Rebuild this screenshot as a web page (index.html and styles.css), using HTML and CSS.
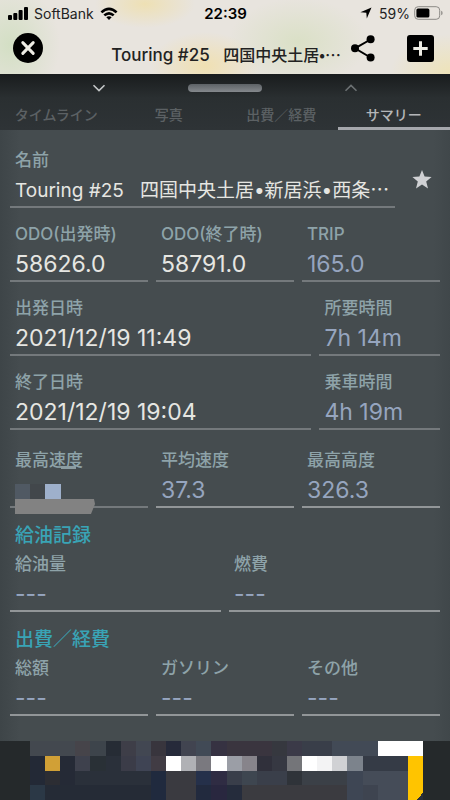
FILE: index.html
```html
<!DOCTYPE html>
<html lang="ja">
<head>
<meta charset="utf-8">
<meta name="viewport" content="width=device-width, initial-scale=1">
<title>Touring #25</title>
<link rel="stylesheet" href="styles.css">
</head>
<body>
<div class="app">
  <header class="top">
    <div class="status">
      <div class="status-side">
        <svg class="signal" viewBox="0 0 20 13" aria-hidden="true"><rect x="0" y="8" width="4" height="5" rx="1"/><rect x="5.3" y="6" width="4" height="7" rx="1"/><rect x="10.6" y="3" width="4" height="10" rx="1"/><rect x="16" y="0" width="4" height="13" rx="1"/></svg>
        <span>SoftBank</span>
        <svg class="wifi" viewBox="0 0 18 13" aria-hidden="true"><path d="M0.5 4.4Q9-3.4 17.5 4.4L15.7 6.3Q9 0.2 2.3 6.3ZM3.4 7.4Q9 2.4 14.6 7.4L12.8 9.3Q9 6.1 5.2 9.3ZM6.3 10.3Q9 8.1 11.7 10.3L9 13Z"/></svg>
      </div>
      <time class="clock">22:39</time>
      <div class="status-side status-right">
        <svg class="arrow" viewBox="0 0 12 12" aria-hidden="true"><path d="M11.5.5 6.8 11.6 6.3 5.7.4 5.3Z"/></svg>
        <span>59%</span>
        <svg class="battery" viewBox="0 0 29 14" aria-hidden="true"><rect x=".7" y=".7" width="25" height="12.6" rx="3.5" fill="none" stroke="#8c8a86"/><rect x="2.4" y="2.4" width="13" height="9.2" rx="1.6"/><path d="M27.2 4.7q1.4.6 1.4 2.3t-1.4 2.3z" fill="#8c8a86"/></svg>
      </div>
    </div>
    <div class="bar">
      <button class="icon-btn close" aria-label="閉じる"><svg viewBox="0 0 30 30"><circle cx="15" cy="15" r="15"/><path d="M9.8 9.6 20.2 20.4M20.2 9.6 9.8 20.4" stroke="#eeece4" stroke-width="3" stroke-linecap="round"/></svg></button>
      <h1 class="title">Touring #25&nbsp;&nbsp; <span class="place">四国中央土居•…</span></h1>
      <button class="icon-btn share" aria-label="共有"><svg viewBox="0 0 24 27"><path d="M19.5 4.5 4 13.3 19.5 22.5" fill="none" stroke="#000" stroke-width="2"/><circle cx="19.6" cy="4.3" r="4"/><circle cx="4" cy="13.3" r="4"/><circle cx="19.6" cy="22.4" r="4"/></svg></button>
      <button class="icon-btn add" aria-label="追加"><svg viewBox="0 0 27 27"><rect width="27" height="27" rx="3"/><path d="M13.5 6.3V20.7M6.3 13.5H20.7" stroke="#eeece4" stroke-width="3"/></svg></button>
    </div>
  </header>

  <div class="sheet-head">
    <div class="handle-row">
      <button class="chev" aria-label="下げる"><svg viewBox="0 0 14 8"><path d="M1.5 1.2 7 6.6 12.5 1.2"/></svg></button>
      <div class="handle"></div>
      <button class="chev chev-up" aria-label="上げる"><svg viewBox="0 0 14 8"><path d="M1.5 6.8 7 1.4 12.5 6.8"/></svg></button>
    </div>
    <nav class="tabs">
      <a href="#timeline">タイムライン</a>
      <a href="#photos">写真</a>
      <a href="#costs">出費／経費</a>
      <a href="#summary" class="active" aria-current="page">サマリー</a>
    </nav>
  </div>

  <main class="content" id="summary">
    <div class="row name-row">
      <div class="field grow">
        <label for="name">名前</label>
        <input id="name" class="value name" value="Touring #25&nbsp;&nbsp; 四国中央土居•新居浜•西条⋯">
      </div>
      <button class="star" aria-label="お気に入り"><svg viewBox="0 0 20 19"><path d="M10 0 12.6 6.5 19.6 7 14.2 11.5 16 18.4 10 14.6 4 18.4 5.8 11.5.4 7 7.4 6.5Z"/></svg></button>
    </div>
    <div class="row thirds">
      <div class="field"><label for="odo1">ODO(出発時)</label><input id="odo1" class="value" value="58626.0"></div>
      <div class="field"><label for="odo2">ODO(終了時)</label><input id="odo2" class="value" value="58791.0"></div>
      <div class="field"><label for="trip">TRIP</label><output id="trip" class="value calc">165.0</output></div>
    </div>
    <div class="row wide">
      <div class="field"><label for="start">出発日時</label><input id="start" class="value" value="2021/12/19 11:49"></div>
      <div class="field"><label for="total">所要時間</label><output id="total" class="value calc">7h 14m</output></div>
    </div>
    <div class="row wide">
      <div class="field"><label for="end">終了日時</label><input id="end" class="value" value="2021/12/19 19:04"></div>
      <div class="field"><label for="ride">乗車時間</label><output id="ride" class="value calc">4h 19m</output></div>
    </div>
    <div class="row thirds speeds">
      <div class="field">
        <label for="max">最高速度</label><output id="max" class="value calc"></output>
        <svg class="mask" viewBox="0 0 80 48" aria-hidden="true"><path fill="#8c9da2" d="M46 0H61V3H46Z"/><path fill="#505963" d="M0 18H15V33H0Z"/><path fill="#42474b" d="M15 18H30V33H15Z"/><path fill="#9eb0cb" d="M30 18H46V33H30Z"/><path fill="#828282" d="M0 33H79L80 38 76 48H0Z"/></svg>
      </div>
      <div class="field bright"><label for="avg">平均速度</label><output id="avg" class="value calc">37.3</output></div>
      <div class="field bright"><label for="alt">最高高度</label><output id="alt" class="value calc">326.3</output></div>
    </div>
    <h2>給油記録</h2>
    <div class="row halves">
      <div class="field bright"><label for="fuel">給油量</label><output id="fuel" class="value calc">---</output></div>
      <div class="field bright"><label for="eco">燃費</label><output id="eco" class="value calc">---</output></div>
    </div>
    <h2>出費／経費</h2>
    <div class="row thirds" id="costs">
      <div class="field bright"><label for="sum">総額</label><output id="sum" class="value calc">---</output></div>
      <div class="field bright"><label for="gas">ガソリン</label><output id="gas" class="value calc">---</output></div>
      <div class="field bright"><label for="other">その他</label><output id="other" class="value calc">---</output></div>
    </div>
  </main>

  <footer class="banner">
    <svg viewBox="0 0 26 4" preserveAspectRatio="none" shape-rendering="crispEdges" aria-hidden="true">
      <rect width="26" height="4" fill="#2a303a"/>
      <path fill="#43484f" d="M0 0h3v1H0z"/><path fill="#46444a" d="M3 0h1v1H3z"/><path fill="#3d444b" d="M4 0h1v1H4z"/><path fill="#262c35" d="M5 0h1v1H5z"/><path fill="#3e3e48" d="M6 0h1v1H6z"/><path fill="#424752" d="M7 0h1v1H7z"/><path fill="#38353d" d="M8 0h1v1H8z"/><path fill="#262a3a" d="M9 0h1v1H9z"/><path fill="#414450" d="M10 0h1v1h-1z"/><path fill="#414a56" d="M11 0h1v1h-1z"/><path fill="#363242" d="M12 0h1v1h-1z"/><path fill="#3a353f" d="M13 0h3v1h-3z"/><path fill="#36383f" d="M16 0h1v1h-1z"/><path fill="#3b3a48" d="M17 0h1v1h-1z"/><path fill="#393e49" d="M18 0h2v1h-2z"/><path fill="#424a56" d="M20 0h3v1h-3z"/><path fill="#fff" d="M23 0h3v1h-3z"/>
      <path fill="#232936" d="M0 1h1v2H0z"/><path fill="#d1a036" d="M1 1h1v1H1z"/><path fill="#252a36" d="M2 1h1v2H2z"/><path fill="#3e414d" d="M3 1h1v1H3z"/><path fill="#293036" d="M4 1h1v1H4z"/><path fill="#3b3c48" d="M6 1h1v1H6z"/><path fill="#3f4454" d="M7 1h1v1H7z"/><path fill="#413c44" d="M8 1h1v1H8z"/><path fill="#fff" d="M9 1h1v1H9zM12 1h1v1h-1zM18 1h1v1h-1z"/><path fill="#b0b1b5" d="M10 1h1v1h-1z"/><path fill="#7a797f" d="M11 1h1v1h-1z"/><path fill="#9b9ea6" d="M13 1h1v1h-1z"/><path fill="#87848b" d="M14 1h1v1h-1z"/><path fill="#30303b" d="M15 1h1v1h-1z"/><path fill="#363842" d="M16 1h1v1h-1z"/><path fill="#747579" d="M17 1h1v1h-1z"/><path fill="#f3f3f4" d="M19 1h1v1h-1z"/><path fill="#d0d1d4" d="M20 1h1v1h-1z"/><path fill="#7c838c" d="M21 1h1v1h-1z"/><path fill="#353b46" d="M22 1h3v1h-3z"/>
      <path fill="#2c2d33" d="M1 2h1v1H1z"/><path fill="#202a3e" d="M8 2h1v2H8z"/><path fill="#3a3a40" d="M9 2h2v2H9z"/><path fill="#25304a" d="M11 2h1v1h-1z"/><path fill="#2f2c43" d="M12 2h1v1h-1z"/><path fill="#393e4a" d="M13 2h1v1h-1z"/><path fill="#3e4650" d="M14 2h1v1h-1z"/><path fill="#3a3f4a" d="M15 2h2v1h-2z"/><path fill="#2f3339" d="M17 2h1v1h-1z"/><path fill="#3b4047" d="M18 2h3v1h-3z"/><path fill="#3e4654" d="M21 2h1v2h-1z"/><path fill="#454c58" d="M22 2h3v2h-3z"/>
      <path fill="#2b3846" d="M0 3h1v1H0z"/><path fill="#252b36" d="M1 3h7v1H1z"/><path fill="#222a3e" d="M11 3h1v1h-1z"/><path fill="#29273f" d="M12 3h1v1h-1z"/><path fill="#252c3c" d="M13 3h1v1h-1z"/><path fill="#3b3b40" d="M14 3h7v1h-7z"/><path fill="#3e4450" d="M22 3h1v1h-1z"/>
      <path fill="#ffc400" d="M25 1h1v2.5L25.6 4H25z"/>
    </svg>
  </footer>
</div>
</body>
</html>
```

FILE: styles.css
```css
* { box-sizing: border-box; }

body {
  margin: 0;
  background: #454c4f;
  font-family: Inter, "Noto Sans CJK JP", sans-serif;
}

h1, h2 { margin: 0; }

button {
  padding: 0;
  border: 0;
  background: none;
  cursor: pointer;
}

svg { display: block; }

.app {
  display: flex;
  flex-direction: column;
  min-height: 100vh;
}

/* Header over the map */
.top {
  background:
    radial-gradient(ellipse 50px 60px at 10px 45px, #d3dfc4, transparent),
    radial-gradient(ellipse 50px 24px at 145px 4px, #eee0b4, transparent),
    radial-gradient(ellipse 55px 34px at 205px 66px, #f0e0b2, transparent),
    radial-gradient(ellipse 70px 44px at 298px 42px, #dae0c6, transparent),
    radial-gradient(ellipse 60px 40px at 450px 74px, #eee3b8, transparent),
    #e8e4de;
  color: #222;
}

.status {
  display: grid;
  grid-template-columns: 1fr auto 1fr;
  align-items: center;
  height: 26px;
  padding: 0 7px 0 8px;
  font-size: 14px;
}

.status-side {
  display: flex;
  align-items: center;
  gap: 6px;
}

.status-right { justify-content: flex-end; gap: 4px; }
.signal { width: 20px; height: 13px; }
.wifi { width: 18px; height: 13px; }
.arrow { width: 12px; height: 12px; margin-right: 3px; }
.battery { width: 29px; height: 14px; }
.clock { font-size: 15px; font-weight: 600; color: #000; }

.bar {
  display: flex;
  align-items: flex-start;
  height: 48px;
  padding: 7px 16px 0 13px;
}

.close svg { width: 30px; height: 30px; }
.share svg { width: 24px; height: 27px; }
.add { margin-left: 32px; }
.add svg { width: 27px; height: 27px; }
.icon-btn { padding-top: 2px; }
.close { padding-top: 0; }

.title {
  flex: 1;
  padding: 9px 10px 0 0;
  text-align: right;
  white-space: nowrap;
  font-size: 17px;
  line-height: 24px;
  font-weight: 500;
}

.place {
  font-family: "Noto Sans CJK JP", sans-serif;
  font-size: 16px;
}

/* Sheet grip and tabs */
.sheet-head {
  background: linear-gradient(#191c1d, #2a2f31 24px, #2e3336);
}

.handle-row {
  display: grid;
  grid-template-columns: 1fr 74px 1fr;
  align-items: center;
  justify-items: center;
  height: 28px;
}

.handle {
  width: 74px;
  height: 8px;
  border-radius: 4px;
  background: linear-gradient(#5d6266, #85898d);
}

.chev { padding-left: 10px; }
.chev-up { padding: 0 10px 0 0; }
.chev svg {
  width: 14px;
  height: 8px;
  fill: none;
  stroke: #c5c8c9;
  stroke-width: 1.6;
}
.chev-up svg { stroke: #6c7173; }

.tabs {
  display: grid;
  grid-template-columns: repeat(4, 1fr);
}

.tabs a {
  height: 28px;
  border-bottom: 3px solid transparent;
  color: #5c6164;
  font-size: 14px;
  line-height: 26px;
  font-weight: 500;
  text-align: center;
  text-decoration: none;
}

.tabs .active {
  border-color: #a5a7ac;
  color: #b4b6b8;
}

/* Summary form */
.content {
  flex: 1;
  padding: 20px 10px 24px;
  background: linear-gradient(90deg, #3e4548, #454c4f 20px, #454c4f calc(100% - 16px), #40474a);
}

.row {
  display: grid;
  gap: 8px;
  margin-bottom: 16px;
}

.name-row {
  grid-template-columns: 1fr 37px;
  align-items: center;
}

.thirds { grid-template-columns: repeat(3, 1fr); }
.halves { grid-template-columns: repeat(2, 1fr); }
.wide { grid-template-columns: 5fr 2fr; }
.row:last-child { margin-bottom: 0; }

.field {
  position: relative;
  display: flex;
  flex-direction: column;
  min-width: 0;
  border-bottom: 2px solid #74797c;
}

.bright { border-color: #929698; }

.field label {
  padding-left: 5px;
  color: #8ea3a9;
  font-size: 17px;
  line-height: 20px;
  font-weight: 500;
}

.value {
  display: block;
  width: 100%;
  height: 36px;
  padding: 4px 0 0 5px;
  border: 0;
  outline: 0;
  background: none;
  color: #e6e6e2;
  font-family: inherit;
  font-size: 23px;
  line-height: 32px;
}

.calc { color: #96a5bf; }
.name { padding-top: 0; font-size: 19px; }
.speeds { margin-top: 20px; }

.mask {
  position: absolute;
  left: 5px;
  top: 16px;
  width: 80px;
  height: 48px;
}

.star svg {
  width: 20px;
  height: 19px;
  margin: 0 auto;
  fill: #d0d1d4;
}

h2 {
  margin-bottom: 6px;
  padding-left: 5px;
  color: #39a4b6;
  font-size: 19px;
  line-height: 24px;
  font-weight: 500;
}

.banner {
  padding: 0 27px 0 30px;
  background: #25292b;
}

.banner svg {
  width: 100%;
  height: 59px;
}
```
